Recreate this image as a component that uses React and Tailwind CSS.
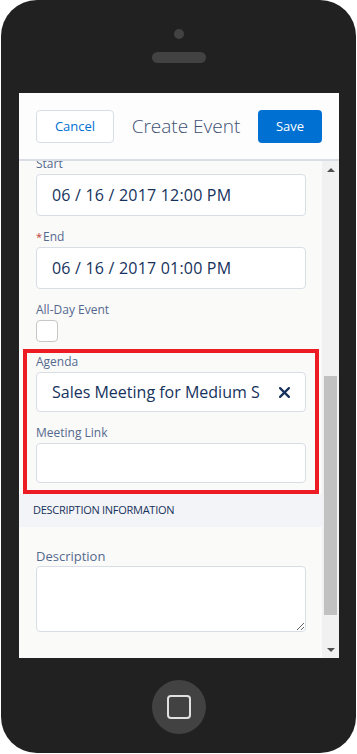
import React from 'react';

// 手机框里的“新建事件”表单截图还原

const Field = ({ label, required, className = '', children }) => (
  <div className={className}>
    <div className="h-[18px] leading-[18px] text-[12px] text-[#54698d]">
      {required && <span className="text-[#c23934] text-[11px] align-top mr-px">*</span>}
      {label}
    </div>
    <div className="mt-px">{children}</div>
  </div>
);

const DateInput = ({ value }) => (
  <div className="h-[42px] bg-white border border-[#d8dde6] rounded-[4px] flex items-center pl-[15px] text-[16px] text-[#16325c] tracking-[0.2px]">
    {value}
  </div>
);

const App = () => {
  return (
    <div className="w-[357px] h-[754px] bg-white font-['Open_Sans','Noto_Sans',sans-serif]">
      <div className="ml-px w-[355px] h-[753px] rounded-[36px] bg-[#212121] flex flex-col">
        {/* 顶部：摄像头 + 听筒 */}
        <div className="h-[93px] flex flex-col items-center pt-[29px]">
          <div className="w-[10px] h-[10px] rounded-full bg-[#424242]"></div>
          <div className="mt-[13px] w-[54px] h-[11px] rounded-full bg-[#424242]"></div>
        </div>

        {/* 屏幕 */}
        <div className="ml-[18px] w-[320px] h-[565px] bg-white flex flex-col overflow-hidden">
          {/* 导航栏 */}
          <div className="h-[68px] shrink-0 bg-[#fdfdfd] border-b-2 border-[#d8dde6] flex items-center justify-between pl-[17px] pr-[17px] pt-px">
            <button className="w-[78px] h-[33px] bg-white border border-[#d8dde6] rounded-[4px] text-[13px] text-[#0070d2]">
              Cancel
            </button>
            <span className="text-[19px] font-light text-[#3e5074] leading-none">Create Event</span>
            <button className="w-[64px] h-[33px] bg-[#0070d2] rounded-[4px] text-[13px] text-white">
              Save
            </button>
          </div>

          <div className="flex flex-1 min-h-0">
            {/* 内容区 */}
            <div className="relative flex-1 overflow-hidden bg-[#fafaf9]">
              <div className="pl-[17px] pr-[16px] -mt-[6px]">
                <Field label="Start">
                  <DateInput value="06 / 16 / 2017 12:00 PM" />
                </Field>
                <Field label="End" required className="mt-[12px]">
                  <DateInput value="06 / 16 / 2017 01:00 PM" />
                </Field>
                <Field label="All-Day Event" className="mt-[12px]">
                  <div className="w-[22px] h-[22px] bg-white border border-[#c9c7c5] rounded-[4px]"></div>
                </Field>
                <Field label="Agenda" className="mt-[11px]">
                  <div className="h-[40px] bg-white border border-[#d8dde6] rounded-[4px] flex items-center justify-between pl-[15px] pr-[15px] text-[16px] text-[#16325c]">
                    <span className="whitespace-nowrap overflow-hidden">Sales Meeting for Medium S</span>
                    <svg width="11" height="11" viewBox="0 0 10 10" className="shrink-0 ml-2">
                      <path d="M1 1 L9 9 M9 1 L1 9" stroke="#16325c" strokeWidth="2" strokeLinecap="round" />
                    </svg>
                  </div>
                </Field>
                <Field label="Meeting Link" className="mt-[12px]">
                  <div className="h-[40px] bg-white border border-[#d8dde6] rounded-[4px]"></div>
                </Field>
              </div>

              {/* 分组标题 */}
              <div className="mt-[11px] h-[33px] bg-[#f3f4f7] flex items-center pl-[14px] text-[11px] text-[#16325c] tracking-tight">
                DESCRIPTION INFORMATION
              </div>

              <div className="pl-[17px] pr-[16px] mt-[19px]">
                <div className="h-[20px] leading-[20px] text-[13px] text-[#54698d]">Description</div>
                <textarea className="block w-full h-[66px] bg-white border border-[#d8dde6] rounded-[4px] outline-none"></textarea>
              </div>

              {/* 红色高亮框 */}
              <div className="absolute left-[4px] top-[188px] w-[296px] h-[145px] border-4 border-[#ed1c24] pointer-events-none"></div>
            </div>

            {/* 滚动条 */}
            <div className="w-[17px] shrink-0 bg-[#f1f1f1] flex flex-col items-center">
              <div className="h-[17px] flex items-center justify-center">
                <div className="w-0 h-0 border-l-[4px] border-r-[4px] border-b-[4px] border-l-transparent border-r-transparent border-b-[#505050]"></div>
              </div>
              <div className="h-[198px]"></div>
              <div className="w-[13px] h-[239px] bg-[#c1c1c1]"></div>
              <div className="flex-1"></div>
              <div className="h-[17px] flex items-center justify-center">
                <div className="w-0 h-0 border-l-[4px] border-r-[4px] border-t-[4px] border-l-transparent border-r-transparent border-t-[#505050]"></div>
              </div>
            </div>
          </div>
        </div>

        {/* 主页键 */}
        <div className="flex justify-center mt-[22px]">
          <div className="w-[54px] h-[54px] rounded-full bg-[#424242] flex items-center justify-center">
            <div className="w-[24px] h-[24px] border-2 border-[#e0e0e0] rounded-[4px]"></div>
          </div>
        </div>
      </div>
    </div>
  );
};

export default App;
